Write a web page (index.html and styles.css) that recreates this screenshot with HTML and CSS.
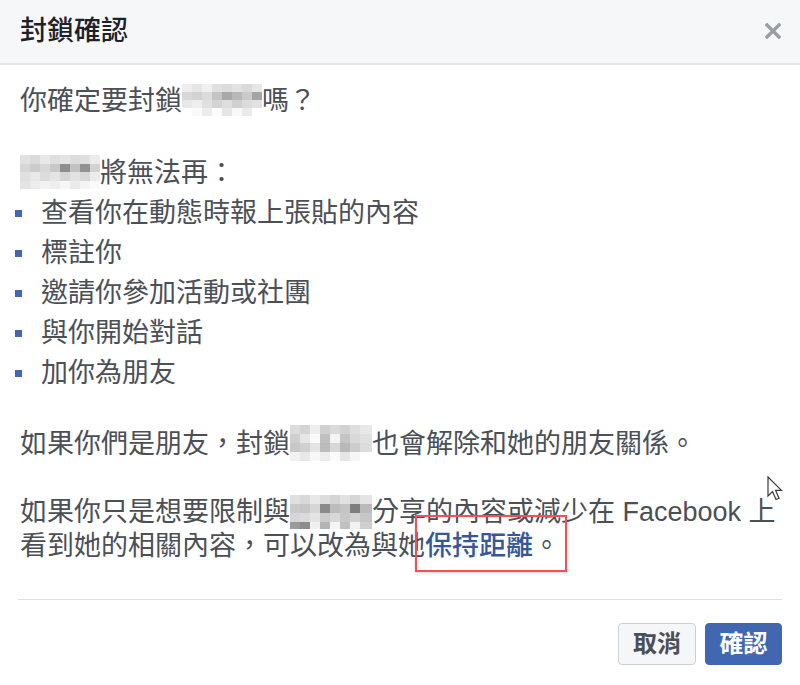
FILE: index.html
```html
<!DOCTYPE html>
<html lang="zh-Hant">
<head>
<meta charset="utf-8">
<title>封鎖確認</title>
<link rel="stylesheet" href="styles.css">
</head>
<body>
<div class="dialog">
  <header class="hd">
    <h1 class="title">封鎖確認</h1>
    <button class="close" aria-label="關閉">
      <svg width="16" height="16" viewBox="0 0 16 16"><path d="M2 2 L14 14 M14 2 L2 14" stroke="#9a9ea6" stroke-width="3.4" stroke-linecap="square"/></svg>
    </button>
  </header>
  <div class="bd">
    <p class="q">你確定要封鎖<svg class="blur" width="80" height="32" viewBox="0 0 80 32"><rect width="80" height="32" fill="#e4e4e4"/><rect x="0" y="0" width="10" height="8" fill="#eeeeee"/><rect x="10" y="0" width="10" height="8" fill="#e6e6e6"/><rect x="20" y="0" width="10" height="8" fill="#f0f0f0"/><rect x="30" y="0" width="10" height="8" fill="#e0e0e0"/><rect x="40" y="0" width="10" height="8" fill="#dcdcdc"/><rect x="50" y="0" width="10" height="8" fill="#e2e2e2"/><rect x="60" y="0" width="10" height="8" fill="#dadada"/><rect x="70" y="0" width="10" height="8" fill="#e6e6e6"/><rect x="0" y="8" width="10" height="8" fill="#d8d8d8"/><rect x="10" y="8" width="10" height="8" fill="#d2d2d2"/><rect x="20" y="8" width="10" height="8" fill="#dcdcdc"/><rect x="30" y="8" width="10" height="8" fill="#c4c4c4"/><rect x="40" y="8" width="10" height="8" fill="#a8a8a8"/><rect x="50" y="8" width="10" height="8" fill="#b8b8b8"/><rect x="60" y="8" width="10" height="8" fill="#cacaca"/><rect x="70" y="8" width="10" height="8" fill="#a4a4a4"/><rect x="0" y="16" width="10" height="8" fill="#e8e8e8"/><rect x="10" y="16" width="10" height="8" fill="#eeeeee"/><rect x="20" y="16" width="10" height="8" fill="#e0e0e0"/><rect x="30" y="16" width="10" height="8" fill="#d4d4d4"/><rect x="40" y="16" width="10" height="8" fill="#dedede"/><rect x="50" y="16" width="10" height="8" fill="#d0d0d0"/><rect x="60" y="16" width="10" height="8" fill="#dcdcdc"/><rect x="70" y="16" width="10" height="8" fill="#e2e2e2"/><rect x="0" y="24" width="10" height="8" fill="#ffffff"/><rect x="10" y="24" width="10" height="8" fill="#fafafa"/><rect x="20" y="24" width="10" height="8" fill="#ececec"/><rect x="30" y="24" width="10" height="8" fill="#fcfcfc"/><rect x="40" y="24" width="10" height="8" fill="#e6e6e6"/><rect x="50" y="24" width="10" height="8" fill="#f8f8f8"/><rect x="60" y="24" width="10" height="8" fill="#eaeaea"/><rect x="70" y="24" width="10" height="8" fill="#ffffff"/></svg>嗎？</p>
    <p class="lead"><svg class="blur blur-lead" width="80" height="34" viewBox="0 0 80 34"><rect width="80" height="34" fill="#e6e6e6"/><rect x="0" y="0" width="10" height="9" fill="#e2e2e2"/><rect x="10" y="0" width="10" height="9" fill="#dadada"/><rect x="20" y="0" width="10" height="9" fill="#e8e8e8"/><rect x="30" y="0" width="10" height="9" fill="#dedede"/><rect x="40" y="0" width="10" height="9" fill="#e4e4e4"/><rect x="50" y="0" width="10" height="9" fill="#dcdcdc"/><rect x="60" y="0" width="10" height="9" fill="#e0e0e0"/><rect x="70" y="0" width="10" height="9" fill="#ececec"/><rect x="0" y="9" width="10" height="8" fill="#d6d6d6"/><rect x="10" y="9" width="10" height="8" fill="#cccccc"/><rect x="20" y="9" width="10" height="8" fill="#d8d8d8"/><rect x="30" y="9" width="10" height="8" fill="#c8c8c8"/><rect x="40" y="9" width="10" height="8" fill="#8e8e8e"/><rect x="50" y="9" width="10" height="8" fill="#c2c2c2"/><rect x="60" y="9" width="10" height="8" fill="#929292"/><rect x="70" y="9" width="10" height="8" fill="#d2d2d2"/><rect x="0" y="17" width="10" height="9" fill="#e0e0e0"/><rect x="10" y="17" width="10" height="9" fill="#e8e8e8"/><rect x="20" y="17" width="10" height="9" fill="#dcdcdc"/><rect x="30" y="17" width="10" height="9" fill="#e4e4e4"/><rect x="40" y="17" width="10" height="9" fill="#d6d6d6"/><rect x="50" y="17" width="10" height="9" fill="#e2e2e2"/><rect x="60" y="17" width="10" height="9" fill="#d8d8d8"/><rect x="70" y="17" width="10" height="9" fill="#ececec"/><rect x="0" y="26" width="10" height="8" fill="#e4e4e4"/><rect x="10" y="26" width="10" height="8" fill="#ececec"/><rect x="20" y="26" width="10" height="8" fill="#f2f2f2"/><rect x="30" y="26" width="10" height="8" fill="#eeeeee"/><rect x="40" y="26" width="10" height="8" fill="#f6f6f6"/><rect x="50" y="26" width="10" height="8" fill="#eaeaea"/><rect x="60" y="26" width="10" height="8" fill="#f4f4f4"/><rect x="70" y="26" width="10" height="8" fill="#fafafa"/></svg>將無法再：</p>
    <ul class="list">
      <li>查看你在動態時報上張貼的內容</li>
      <li>標註你</li>
      <li>邀請你參加活動或社團</li>
      <li>與你開始對話</li>
      <li>加你為朋友</li>
    </ul>
    <p class="p3">如果你們是朋友，封鎖<svg class="blur blur-mid" width="82" height="36" viewBox="0 0 82 36"><rect width="82" height="36" fill="#e2e2e2"/><rect x="0" y="0" width="10" height="9" fill="#dcdcdc"/><rect x="10" y="0" width="10" height="9" fill="#d4d4d4"/><rect x="20" y="0" width="10" height="9" fill="#eeeeee"/><rect x="30" y="0" width="10" height="9" fill="#d0d0d0"/><rect x="40" y="0" width="10" height="9" fill="#dadada"/><rect x="50" y="0" width="10" height="9" fill="#d2d2d2"/><rect x="60" y="0" width="10" height="9" fill="#dedede"/><rect x="70" y="0" width="12" height="9" fill="#e8e8e8"/><rect x="0" y="9" width="10" height="9" fill="#cfcfcf"/><rect x="10" y="9" width="10" height="9" fill="#e6e6e6"/><rect x="20" y="9" width="10" height="9" fill="#fafafa"/><rect x="30" y="9" width="10" height="9" fill="#c0c0c0"/><rect x="40" y="9" width="10" height="9" fill="#f4f4f4"/><rect x="50" y="9" width="10" height="9" fill="#c4c4c4"/><rect x="60" y="9" width="10" height="9" fill="#d8d8d8"/><rect x="70" y="9" width="12" height="9" fill="#e0e0e0"/><rect x="0" y="18" width="10" height="9" fill="#c8c8c8"/><rect x="10" y="18" width="10" height="9" fill="#d0d0d0"/><rect x="20" y="18" width="10" height="9" fill="#e4e4e4"/><rect x="30" y="18" width="10" height="9" fill="#bcbcbc"/><rect x="40" y="18" width="10" height="9" fill="#d8d8d8"/><rect x="50" y="18" width="10" height="9" fill="#b8b8b8"/><rect x="60" y="18" width="10" height="9" fill="#cccccc"/><rect x="70" y="18" width="12" height="9" fill="#dcdcdc"/><rect x="0" y="27" width="10" height="9" fill="#f2f2f2"/><rect x="10" y="27" width="10" height="9" fill="#e8e8e8"/><rect x="20" y="27" width="10" height="9" fill="#f8f8f8"/><rect x="30" y="27" width="10" height="9" fill="#ececec"/><rect x="40" y="27" width="10" height="9" fill="#fafafa"/><rect x="50" y="27" width="10" height="9" fill="#e6e6e6"/><rect x="60" y="27" width="10" height="9" fill="#f6f6f6"/><rect x="70" y="27" width="12" height="9" fill="#ffffff"/></svg>也會解除和她的朋友關係。</p>
    <p class="p4">如果你只是想要限制與<svg class="blur blur-mid" width="82" height="34" viewBox="0 0 82 34"><rect width="82" height="34" fill="#e0e0e0"/><rect x="0" y="0" width="10" height="9" fill="#e0e0e0"/><rect x="10" y="0" width="10" height="9" fill="#d8d8d8"/><rect x="20" y="0" width="10" height="9" fill="#e8e8e8"/><rect x="30" y="0" width="10" height="9" fill="#dcdcdc"/><rect x="40" y="0" width="10" height="9" fill="#d4d4d4"/><rect x="50" y="0" width="10" height="9" fill="#e2e2e2"/><rect x="60" y="0" width="10" height="9" fill="#d6d6d6"/><rect x="70" y="0" width="12" height="9" fill="#e4e4e4"/><rect x="0" y="9" width="10" height="9" fill="#cacaca"/><rect x="10" y="9" width="10" height="9" fill="#c6c6c6"/><rect x="20" y="9" width="10" height="9" fill="#d6d6d6"/><rect x="30" y="9" width="10" height="9" fill="#8a8a8a"/><rect x="40" y="9" width="10" height="9" fill="#bcbcbc"/><rect x="50" y="9" width="10" height="9" fill="#c4c4c4"/><rect x="60" y="9" width="10" height="9" fill="#7e7e7e"/><rect x="70" y="9" width="12" height="9" fill="#bababa"/><rect x="0" y="18" width="10" height="9" fill="#d6d6d6"/><rect x="10" y="18" width="10" height="9" fill="#dadada"/><rect x="20" y="18" width="10" height="9" fill="#e4e4e4"/><rect x="30" y="18" width="10" height="9" fill="#cccccc"/><rect x="40" y="18" width="10" height="9" fill="#d8d8d8"/><rect x="50" y="18" width="10" height="9" fill="#c8c8c8"/><rect x="60" y="18" width="10" height="9" fill="#d2d2d2"/><rect x="70" y="18" width="12" height="9" fill="#c6c6c6"/><rect x="0" y="27" width="10" height="7" fill="#9a9a9a"/><rect x="10" y="27" width="10" height="7" fill="#8c8c8c"/><rect x="20" y="27" width="10" height="7" fill="#f0f0f0"/><rect x="30" y="27" width="10" height="7" fill="#b4b4b4"/><rect x="40" y="27" width="10" height="7" fill="#f4f4f4"/><rect x="50" y="27" width="10" height="7" fill="#c0c0c0"/><rect x="60" y="27" width="10" height="7" fill="#f2f2f2"/><rect x="70" y="27" width="12" height="7" fill="#cfcfcf"/></svg>分享的內容或減少在 Facebook 上<br>看到她的相關內容，可以改為與她<a class="link" href="#">保持距離</a>。</p>
  </div>
  <footer class="ft">
    <button class="btn btn-cancel">取消</button>
    <button class="btn btn-confirm">確認</button>
  </footer>
  <div class="highlight"></div>
  <svg class="cursor" width="16" height="26" viewBox="0 0 16 26"><path d="M1 1 L1 20 L5.5 15.5 L9 23.5 L12 22.2 L8.6 14.4 L14.5 14.4 Z" fill="#ffffff" stroke="#3a3a3a" stroke-width="1.2" stroke-linejoin="miter"/></svg>
</div>
</body>
</html>
```

FILE: styles.css
```css
* { box-sizing: border-box; }

html, body {
  margin: 0;
  padding: 0;
  background: #ffffff;
}

body {
  font-family: "Liberation Sans", "Noto Sans CJK TC", "Noto Sans", sans-serif;
  color: #4b4f56;
}

.dialog {
  position: relative;
  width: 800px;
  height: 685px;
  background: #ffffff;
  overflow: hidden;
}

.hd {
  display: flex;
  align-items: center;
  justify-content: space-between;
  height: 65px;
  padding: 0 19px 2px 20px;
  background: #f6f7f9;
  border-bottom: 2px solid #e5e5e5;
}

.title {
  margin: 0;
  font-size: 27px;
  font-weight: 500;
  color: #1d2129;
  line-height: 34px;
}

.close {
  display: flex;
  padding: 0;
  margin: 0;
  border: 0;
  background: none;
  width: 16px;
  height: 16px;
}

.bd {
  padding: 19px 20px 0 20px;
  font-size: 27px;
  line-height: 34px;
}

.bd p {
  margin: 0;
  white-space: nowrap;
}

.q { margin-bottom: 37px !important; }

.blur {
  display: inline-block;
  vertical-align: -6px;
}

.blur-lead { vertical-align: -7px; }

.blur-mid { vertical-align: -8px; }

.list {
  list-style: none;
  margin: 3px 0 0 0;
  padding: 0;
}

.list li {
  display: flex;
  align-items: center;
  line-height: 40px;
  height: 40px;
}

.list li::before {
  content: "";
  display: block;
  width: 7px;
  height: 7px;
  background: #4267b2;
  margin-left: -5px;
  margin-right: 19px;
  flex: none;
}

.p3 { margin-top: 32px !important; }

.p4 { margin-top: 34px !important; }

.link {
  color: #365899;
  text-decoration: none;
  font-weight: 500;
}

.ft {
  display: flex;
  justify-content: flex-end;
  gap: 9px;
  margin: 36px 18px 0 18px;
  padding-top: 23px;
  border-top: 1px solid #dddfe2;
}

.btn {
  height: 42px;
  padding: 0;
  border-radius: 4px;
  font-family: "Liberation Sans", "Noto Sans CJK TC", sans-serif;
  font-size: 24px;
  font-weight: bold;
  line-height: 40px;
  white-space: nowrap;
  text-align: center;
}

.btn-cancel {
  width: 78px;
  background: #f5f6f7;
  border: 1px solid #ccd0d5;
  color: #4b4f56;
}

.btn-confirm {
  width: 77px;
  background: #4267b2;
  border: 1px solid #4267b2;
  color: #ffffff;
}

.highlight {
  position: absolute;
  left: 415px;
  top: 515px;
  width: 152px;
  height: 57px;
  border: 2px solid #ee5156;
  box-shadow: 0 1px 3px rgba(0, 0, 0, 0.18);
  pointer-events: none;
}

.cursor {
  position: absolute;
  left: 767px;
  top: 476px;
}
```
